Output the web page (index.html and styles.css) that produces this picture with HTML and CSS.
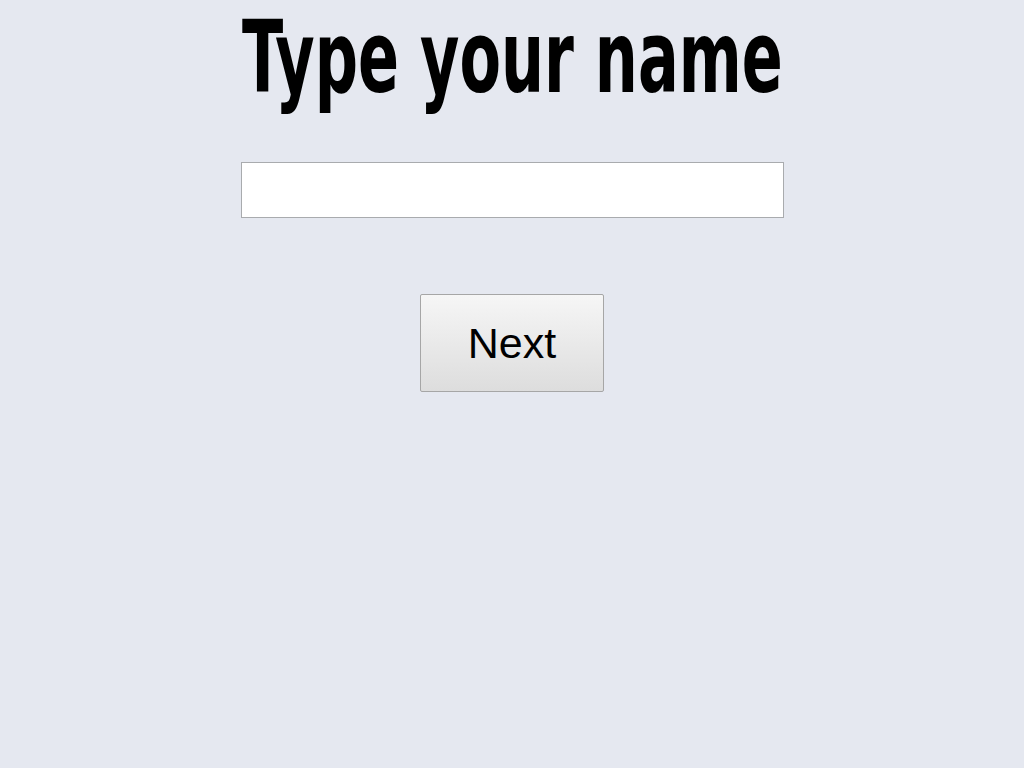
FILE: index.html
```html
<!DOCTYPE html>
<html>
<head>
<meta charset="utf-8">
<link rel="stylesheet" href="styles.css">
</head>
<body>
<main class="page">
  <h1 class="title"><span class="title-text">Type your name</span></h1>
  <input class="name-input" type="text" aria-label="Your name">
  <button class="next-btn" type="button">Next</button>
</main>
</body>
</html>
```
FILE: styles.css
```css
html, body {
  margin: 0;
  padding: 0;
  background: #e5e8f0;
}
.page {
  display: flex;
  flex-direction: column;
  align-items: center;
  padding-top: 8px;
  min-height: 760px;
}
.title {
  margin: 0;
  height: 100px;
  line-height: 100px;
  font-family: "DejaVu Sans Condensed", "DejaVu Sans", sans-serif;
  font-weight: bold;
  font-size: 100px;
  color: #000;
  white-space: nowrap;
}
.title-text {
  display: inline-block;
  transform: scaleX(0.672);
  transform-origin: center;
}
.name-input {
  margin-top: 54px;
  width: 543px;
  height: 56px;
  box-sizing: border-box;
  border: 1px solid #a9abae;
  background: #fff;
  padding: 0 8px;
  font-family: "Liberation Sans", Arial, sans-serif;
  font-size: 24px;
  outline: none;
}
.next-btn {
  margin-top: 76px;
  width: 184px;
  height: 98px;
  box-sizing: border-box;
  border: 1px solid #a6a6a6;
  border-radius: 2px;
  background: linear-gradient(#f6f6f6, #dddddd);
  font-family: "Liberation Sans", Arial, sans-serif;
  font-size: 43px;
  color: #000;
  padding: 0;
}
```
